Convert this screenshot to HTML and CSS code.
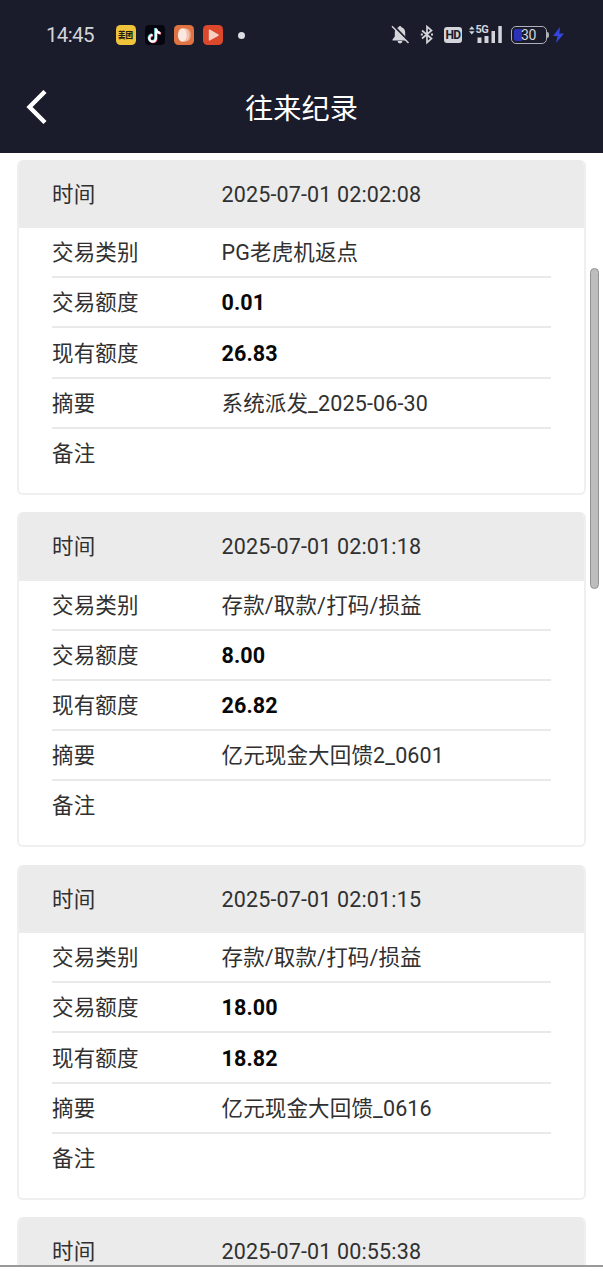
FILE: index.html
```html
<!DOCTYPE html>
<html lang="zh-CN">
<head>
<meta charset="utf-8">
<title>往来纪录</title>
<link rel="stylesheet" href="styles.css">
</head>
<body>
<header class="top">
  <div class="status">
    <span class="clock">14:45</span>
    <div class="apps">
      <span class="meituan">美团</span>
      <svg width="20" height="20" viewBox="0 0 20 20"><rect width="20" height="20" rx="4" fill="#05060f"/><g fill="none" stroke-width="2.2"><path d="M10.300 3v9.800a3.300 3.300 0 1 1-3.300-3.300M10.300 3.500c.4 2.600 2 4 4.600 4.200" stroke="#4fd8dc"/><path d="M11.500 4v9.800a3.300 3.300 0 1 1-3.300-3.300M11.500 4.500c.4 2.600 2 4 4.600 4.200" stroke="#e44262"/><path d="M10.900 3.500v9.800a3.300 3.300 0 1 1-3.300-3.300M10.900 3.500c.4 2.800 2 4.400 4.600 4.600" stroke="#fff"/></g></svg>
      <svg width="20" height="20" viewBox="0 0 20 20"><rect width="20" height="20" rx="4.5" fill="#df7342"/><ellipse cx="12.600" cy="10" rx="4.300" ry="6.200" fill="#efa587"/><ellipse cx="10.700" cy="10" rx="4.600" ry="6.800" fill="#f4c3ae"/><ellipse cx="8.300" cy="10" rx="4.400" ry="6.800" fill="#fbe9e1"/></svg>
      <svg width="20" height="20" viewBox="0 0 20 20"><rect width="20" height="20" rx="4.500" fill="#dc482b"/><path d="M6.500 5.200v9.800l8.600-4.900z" fill="#f8cfc5" stroke="#f8cfc5" stroke-width="1.400" stroke-linejoin="round"/></svg>
    </div>
    <span class="dot"></span>
    <div class="signals">
      <svg width="20" height="20" viewBox="0 0 20 20"><path d="M10 1a1.400 1.400 0 0 0-1.400 1.200C6 3 4.800 5 4.800 7.500v4L2.500 14.500v1h15v-1l-2.300-3v-4C15.200 5 14 3 11.400 2.200A1.400 1.400 0 0 0 10 1zM7.600 16a2.400 2.400 0 0 0 4.800 0z" fill="#d4d5da"/><path d="M3.400.600 19.300 17" stroke="#1a1b2b" stroke-width="2"/><path d="M2 1.300 18.500 18" stroke="#d4d5da" stroke-width="1.500"/></svg>
      <svg class="bt" width="14" height="20" viewBox="0 0 14 20"><path d="M2 5.500l9.500 8L7 17.600V1.600L11.500 5.500 2 13.500" fill="none" stroke="#d4d5da" stroke-width="1.700"/><path d="M.800 8.500h2v2h-2zM11 8.500h2v2h-2z" fill="#d4d5da"/></svg>
      <span class="hd">HD</span>
      <div class="cell">
        <svg width="34" height="20" viewBox="0 0 34 20"><path d="M0 4.500h5.600L2.800 1.200zM0 6.200h5.600l-2.800 3.300zM8.500 12.500h4V18h-4zM15.500 11h4v7h-4zM22.500 6h3.500v12h-3.500zM29.300 1h3.500v17h-3.500z" fill="#d4d5da"/></svg>
        <span class="net">5G</span>
      </div>
      <span class="battery"><span class="level"></span><span class="pct">30</span></span><span class="tip"></span>
      <svg class="bolt" width="11" height="18" viewBox="0 0 11 18"><path d="M7 1 0 10h4.500L3 17l8-9.600H6.300z" fill="#3546e0"/></svg>
    </div>
  </div>
  <nav class="nav">
    <svg class="back" width="22" height="34" viewBox="0 0 22 34"><path d="M19 1.500 3.500 17 19 32.500" fill="none" stroke="#fff" stroke-width="4.400"/></svg>
    <h1 class="title">往来纪录</h1>
  </nav>
</header>
<main class="list">
  <section class="card">
    <div class="head"><span>时间</span><span>2025-07-01 02:02:08</span></div>
    <div class="rows">
      <div class="row"><span>交易类别</span><span>PG老虎机返点</span></div>
      <div class="row"><span>交易额度</span><b>0.01</b></div>
      <div class="row"><span>现有额度</span><b>26.83</b></div>
      <div class="row"><span>摘要</span><span>系统派发_2025-06-30</span></div>
      <div class="row"><span>备注</span></div>
    </div>
  </section>
  <section class="card">
    <div class="head"><span>时间</span><span>2025-07-01 02:01:18</span></div>
    <div class="rows">
      <div class="row"><span>交易类别</span><span>存款/取款/打码/损益</span></div>
      <div class="row"><span>交易额度</span><b>8.00</b></div>
      <div class="row"><span>现有额度</span><b>26.82</b></div>
      <div class="row"><span>摘要</span><span>亿元现金大回馈2_0601</span></div>
      <div class="row"><span>备注</span></div>
    </div>
  </section>
  <section class="card">
    <div class="head"><span>时间</span><span>2025-07-01 02:01:15</span></div>
    <div class="rows">
      <div class="row"><span>交易类别</span><span>存款/取款/打码/损益</span></div>
      <div class="row"><span>交易额度</span><b>18.00</b></div>
      <div class="row"><span>现有额度</span><b>18.82</b></div>
      <div class="row"><span>摘要</span><span>亿元现金大回馈_0616</span></div>
      <div class="row"><span>备注</span></div>
    </div>
  </section>
  <section class="card">
    <div class="head"><span>时间</span><span>2025-07-01 00:55:38</span></div>
  </section>
  <div class="thumb"></div>
</main>
</body>
</html>
```
FILE: styles.css
```css
* { box-sizing: border-box; }
body {
  margin: 0;
  height: 1280px;
  overflow: hidden;
  background: #fff;
  color: #303030;
  font: 21.5px/30px Roboto, "Noto Sans CJK SC", sans-serif;
  letter-spacing: .15px;
}
.top { height: 153px; background: #1a1b2b; color: #fff; letter-spacing: 0; }
.status { display: flex; align-items: center; height: 70px; padding-left: 46px; color: #d4d5da; }
.clock { width: 69.5px; font: 20.5px/24px Roboto, sans-serif; letter-spacing: -.65px; white-space: nowrap; }
.apps { display: flex; gap: 9px; }
.meituan {
  width: 20px; height: 20px; border-radius: 4.5px; background: #f0c33c; color: #211c12;
  font: 900 7.5px/19px "Noto Sans CJK SC", sans-serif; text-align: center; white-space: nowrap;
}
.dot { width: 7px; height: 7px; border-radius: 50%; background: #dcdde2; margin-left: 15.5px; }
.signals { display: flex; align-items: center; margin-left: 145px; }
.bt { margin-left: 10px; }
.hd {
  width: 18px; height: 16px; margin-left: 10px; border-radius: 3px; background: #d4d5da; color: #1a1b2b;
  font: bold 12px/16px Roboto, sans-serif; letter-spacing: -.7px; text-align: center;
}
.cell { position: relative; width: 34px; height: 20px; margin-left: 6.5px; }
.cell svg { display: block; }
.net {
  position: absolute; left: 6px; top: -1px; padding: 0 1px; background: #1a1b2b;
  font: bold 11px/11px Roboto, sans-serif; letter-spacing: -.5px;
}
.battery {
  position: relative; width: 36px; height: 18px; margin-left: 8px; overflow: hidden;
  border: 1.5px solid #aeb0b9; border-radius: 5px;
}
.level { position: absolute; left: 2px; top: 2px; width: 8px; height: 12px; border-radius: 2px 0 0 2px; background: #2c32b8; }
.pct { position: relative; display: block; font: 14px/16px Roboto, sans-serif; letter-spacing: -.4px; text-align: center; }
.tip { width: 2px; height: 6px; background: #aeb0b9; border-radius: 0 2px 2px 0; }
.bolt { margin-left: 4px; }
.nav { position: relative; height: 83px; display: flex; justify-content: center; }
.back { position: absolute; left: 26px; top: 20px; }
.title { margin: 0; padding-top: 20px; font: 400 28.2px/40px Roboto, "Noto Sans CJK SC", sans-serif; }
.list {
  position: relative; height: 1114px; padding: 6.5px 17px 0; overflow: hidden;
  display: flex; flex-direction: column; gap: 17.5px; border-bottom: 2px solid #999;
}
.card { flex: none; border: 2px solid #efefef; border-top-color: #ebebeb; border-radius: 6px; overflow: hidden; height: 335px; }
.head {
  display: grid; grid-template-columns: 169.5px 1fr; align-items: center;
  height: 66.5px; padding: 0 33px; background: #ebebeb;
}
.rows { padding: 0 33px; }
.row {
  display: grid; grid-template-columns: 169.5px 1fr; align-items: center;
  height: 50.2px; padding-top: 2.4px; border-bottom: 2px solid #e9e9e9;
}
.row:last-child { border: 0; padding-top: 0; }
.row b { color: #080808; }
.thumb {
  position: absolute; right: 4px; top: 115px; width: 9px; height: 321px; border-radius: 5px;
  background: #bdbdbd; border: 1.5px solid #929292;
}
```
